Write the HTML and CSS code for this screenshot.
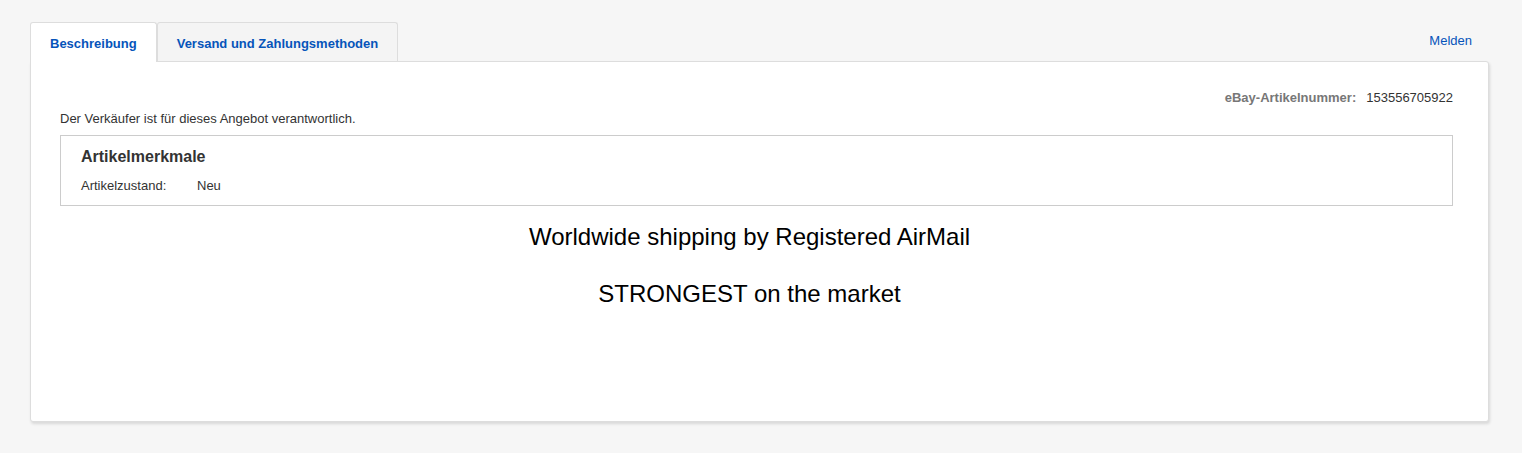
FILE: index.html
```html
<!DOCTYPE html>
<html lang="de">
<head>
<meta charset="utf-8">
<link rel="stylesheet" href="styles.css">
</head>
<body>
<div class="wrap">
  <div class="tabbar">
    <div class="tabs">
      <div class="tab active">Beschreibung</div>
      <div class="tab">Versand und Zahlungsmethoden</div>
    </div>
    <a class="report">Melden</a>
  </div>
  <div class="panel">
    <div class="itemno"><span class="lbl">eBay-Artikelnummer:</span><span class="num">153556705922</span></div>
    <div class="seller">Der Verkäufer ist für dieses Angebot verantwortlich.</div>
    <div class="specs">
      <div class="specs-title">Artikelmerkmale</div>
      <div class="spec-row"><span class="spec-key">Artikelzustand:</span><span class="spec-val">Neu</span></div>
    </div>
    <div class="desc">
      <p>Worldwide shipping by Registered AirMail</p>
      <p>STRONGEST on the market</p>
    </div>
  </div>
</div>
</body>
</html>
```
FILE: styles.css
```css
html, body {
  margin: 0;
  padding: 0;
}
body {
  background: #f6f6f6;
  font-family: "Liberation Sans", Arial, sans-serif;
  color: #333;
  width: 1522px;
  height: 453px;
  overflow: hidden;
}
.wrap {
  padding: 22px 33px 0 30px;
}
.tabbar {
  display: flex;
  align-items: flex-end;
  justify-content: space-between;
  height: 39px;
}
.tabs {
  display: flex;
  height: 39px;
}
.tab {
  box-sizing: border-box;
  height: 39px;
  padding: 13px 19px 0 19px;
  font-size: 13px;
  font-weight: bold;
  color: #0654ba;
  background: #f4f4f4;
  border: 1px solid #dddddd;
  border-bottom: none;
  border-radius: 3px 3px 0 0;
}
.tab.active {
  background: #fff;
  height: 40px;
  position: relative;
  z-index: 1;
  padding-left: 19px;
  padding-right: 19px;
}
.report {
  align-self: flex-start;
  margin-top: 11px;
  margin-right: 17px;
  font-size: 13px;
  color: #0654ba;
}
.panel {
  box-sizing: border-box;
  height: 361px;
  background: #fff;
  border: 1px solid #dddddd;
  border-radius: 0 3px 3px 3px;
  box-shadow: 1px 2px 3px rgba(0,0,0,0.12);
  padding: 28px 35px 0 29px;
}
.itemno {
  text-align: right;
  font-size: 13px;
  line-height: 16px;
  color: #333;
}
.itemno .lbl {
  font-weight: bold;
  color: #777;
  margin-right: 10px;
}
.seller {
  font-size: 13px;
  line-height: 16px;
  margin-top: 5px;
  color: #333;
}
.specs {
  margin-top: 8px;
  border: 1px solid #cccccc;
  height: 71px;
  box-sizing: border-box;
  padding: 11px 20px 0 20px;
}
.specs-title {
  font-size: 16px;
  font-weight: bold;
  line-height: 19px;
  color: #333;
}
.spec-row {
  margin-top: 12px;
  font-size: 13px;
  line-height: 16px;
  display: flex;
}
.spec-key {
  width: 116px;
}
.desc {
  text-align: center;
  font-size: 24px;
  color: #000;
  padding-right: 14px;
}
.desc p {
  margin: 0;
  line-height: 28px;
}
.desc p + p {
  margin-top: 29px;
}
.desc p:first-child {
  margin-top: 17px;
}
```
